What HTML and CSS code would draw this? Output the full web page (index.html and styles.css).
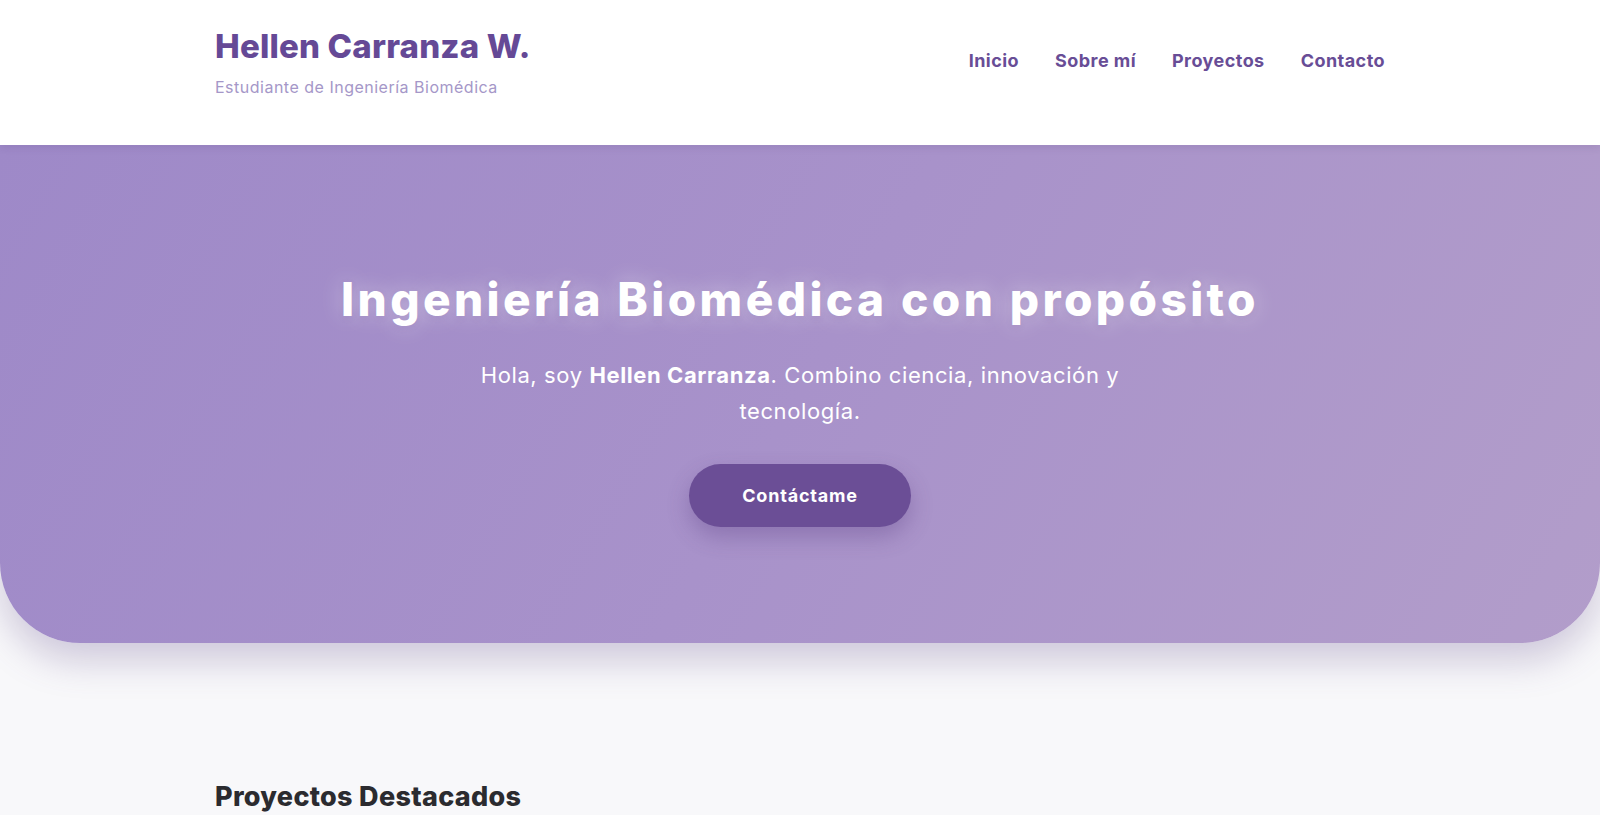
FILE: index.html
```html
<!DOCTYPE html>
<html lang="es">
<head>
<meta charset="utf-8">
<title>Hellen Carranza W.</title>
<link rel="stylesheet" href="styles.css">
</head>
<body>
<header class="site-header">
  <div class="container header-inner">
    <div class="brand">
      <h1 class="brand-title">Hellen Carranza W.</h1>
      <p class="brand-sub">Estudiante de Ingeniería Biomédica</p>
    </div>
    <nav class="nav">
      <a href="#inicio">Inicio</a>
      <a href="#sobre">Sobre mí</a>
      <a href="#proyectos">Proyectos</a>
      <a href="#contacto">Contacto</a>
    </nav>
  </div>
</header>
<section class="hero" id="inicio">
  <h2 class="hero-title">Ingeniería Biomédica con propósito</h2>
  <p class="hero-text">Hola, soy <strong>Hellen Carranza</strong>. Combino ciencia, innovación y tecnología.</p>
  <a class="hero-btn" href="#contacto">Contáctame</a>
</section>
<section class="projects" id="proyectos">
  <div class="container">
    <h2 class="section-title">Proyectos Destacados</h2>
  </div>
</section>
</body>
</html>
```
FILE: styles.css
```css
* { box-sizing: border-box; }
html, body { margin: 0; padding: 0; }
body {
  background: #f8f8fa;
  font-family: Inter, "Open Sans", "Liberation Sans", sans-serif;
  color: #333;
  height: 815px;
  overflow: hidden;
}
.container {
  max-width: 1200px;
  margin: 0 auto;
  padding: 0 15px;
}
.site-header {
  background: #fff;
  height: 145px;
  position: relative;
  z-index: 2;
  box-shadow: 0 2px 8px rgba(60, 40, 90, 0.12);
}
.header-inner {
  display: flex;
  justify-content: space-between;
  align-items: flex-start;
  padding-top: 27px;
}
.brand-title {
  margin: 0;
  font-size: 33px;
  line-height: 38px;
  font-weight: 800;
  letter-spacing: 0.2px;
  color: #654996;
}
.brand-sub {
  margin: 10px 0 0;
  font-size: 16px;
  line-height: 24px;
  letter-spacing: 0.5px;
  color: #a597c8;
}
.nav {
  display: flex;
  gap: 36px;
  margin-top: 21px;
}
.nav a {
  font-size: 18px;
  line-height: 26px;
  font-weight: 700;
  letter-spacing: 0.45px;
  color: #684d96;
  text-decoration: none;
}
.hero {
  position: relative;
  z-index: 1;
  height: 498px;
  padding-top: 127px;
  text-align: center;
  background: linear-gradient(120deg, #9e89c8 0%, #a892ca 50%, #b29dca 100%);
  border-radius: 0 0 80px 80px;
  box-shadow: 0 18px 36px rgba(100, 80, 140, 0.28);
  color: #fff;
}
.hero-title {
  margin: 0;
  font-size: 46px;
  line-height: 55px;
  font-weight: 800;
  letter-spacing: 3.4px;
  text-shadow: 0 0 22px rgba(255, 255, 255, 0.45), 0 2px 6px rgba(80, 50, 120, 0.12);
}
.hero-text {
  margin: 30px auto 0;
  max-width: 720px;
  font-size: 22px;
  line-height: 36px;
  font-weight: 400;
  letter-spacing: 0.6px;
}
.hero-text strong { font-weight: 700; }
.hero-btn {
  display: inline-block;
  margin-top: 35px;
  width: 222px;
  height: 63px;
  line-height: 63px;
  border-radius: 32px;
  background: #6b4e96;
  color: #fff;
  font-size: 18px;
  font-weight: 700;
  letter-spacing: 0.8px;
  text-decoration: none;
  box-shadow: 0 10px 22px rgba(80, 50, 120, 0.3);
}
.projects {
  padding-top: 138px;
}
.section-title {
  margin: 0;
  font-size: 27px;
  line-height: 31px;
  font-weight: 800;
  letter-spacing: 0.3px;
  color: #2b2b2f;
}
```
